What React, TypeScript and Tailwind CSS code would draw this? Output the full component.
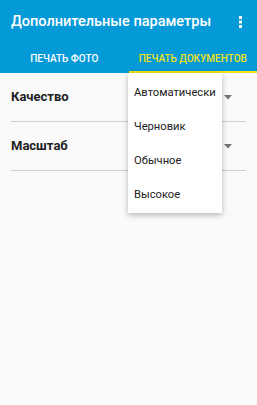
const options = ["Автоматически", "Черновик", "Обычное", "Высокое"];

function Caret() {
  return (
    <svg width="8" height="5" viewBox="0 0 8 5" className="mr-[14px]">
      <path d="M0 0 L8 0 L4 4.5 Z" fill="#757575" />
    </svg>
  );
}

function SettingRow({ label }: { label: string }) {
  return (
    <div className="mx-[11px] flex h-[49px] items-center justify-between border-b border-[#cfcfcf]">
      <span className="text-[13px] font-bold text-[#212121]">{label}</span>
      <Caret />
    </div>
  );
}

export default function App() {
  return (
    <div
      className="relative h-[405px] w-[257px] overflow-hidden bg-[#fafafa]"
      style={{ fontFamily: "Roboto, 'Noto Sans', sans-serif" }}
    >
      <header className="bg-[#0499d7] text-white">
        <div className="flex h-[42px] items-center justify-between pl-[11px] pr-[15px] pt-[1px]">
          <h1 className="text-[14.5px] font-medium">Дополнительные параметры</h1>
          <svg width="3" height="12" viewBox="0 0 3 12">
            <rect x="0" y="0" width="3" height="3" fill="white" />
            <rect x="0" y="4.5" width="3" height="3" fill="white" />
            <rect x="0" y="9" width="3" height="3" fill="white" />
          </svg>
        </div>
        <div className="flex h-[31px] text-[10px] font-medium">
          <div className="flex flex-1 items-center justify-center pt-[1px] text-white">
            ПЕЧАТЬ ФОТО
          </div>
          <div className="flex flex-1 items-center justify-center border-b-2 border-[#f2e318] pt-[3px] text-[#f2e318]">
            ПЕЧАТЬ ДОКУМЕНТОВ
          </div>
        </div>
      </header>

      <main>
        <SettingRow label="Качество" />
        <SettingRow label="Масштаб" />
      </main>

      <div className="absolute left-[128px] top-[73px] w-[94px] bg-white pb-[1px] pt-[3px] shadow-[0_2px_6px_rgba(0,0,0,0.28)]">
        {options.map((o) => (
          <div key={o} className="flex h-[34px] items-center px-[6px] text-[11.2px] text-[#212121]">
            {o}
          </div>
        ))}
      </div>
    </div>
  );
}
